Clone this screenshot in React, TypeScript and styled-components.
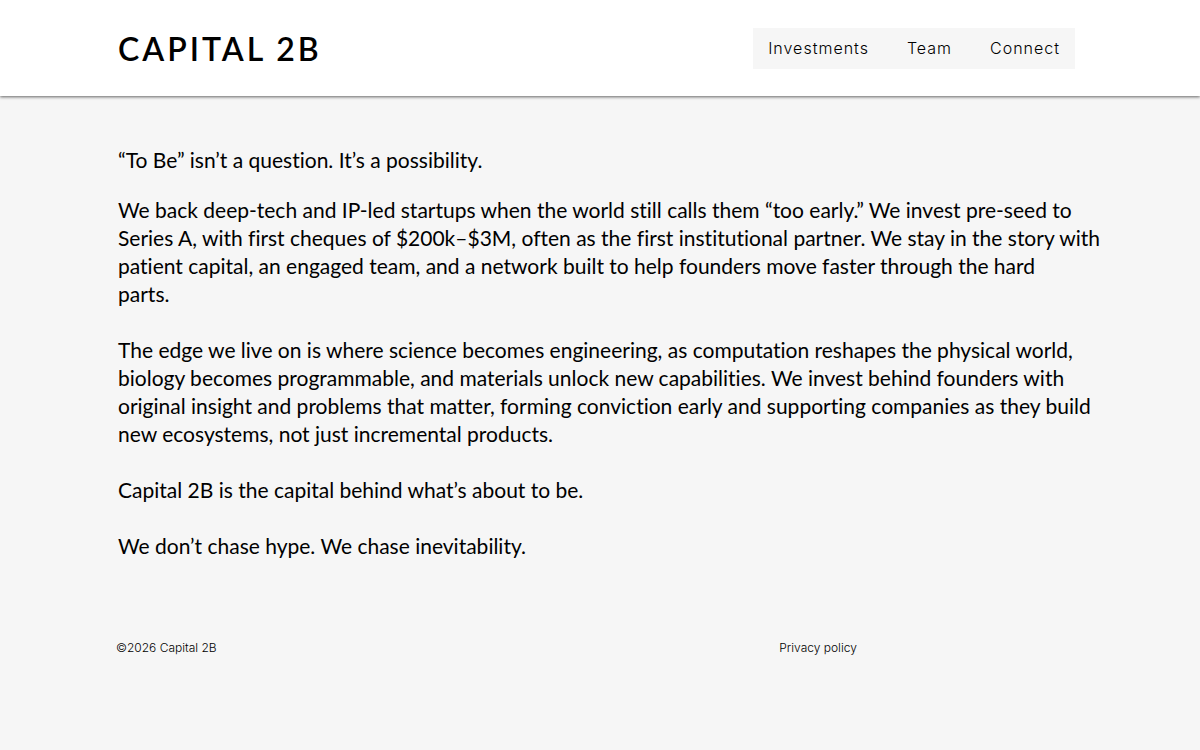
import React from 'react';
import styled, { createGlobalStyle } from 'styled-components';

const GlobalStyle = createGlobalStyle`
  *, *::before, *::after { box-sizing: border-box; }
  body {
    margin: 0;
    background: #f6f6f6;
    color: #000;
    font-family: Inter, "Liberation Sans", sans-serif;
    font-weight: 300;
  }
`;

const Container = styled.div`
  max-width: 980px;
  margin: 0 auto;
  padding: 0 8px;
`;

const Header = styled.header`
  background: #fff;
  box-shadow: 0 1px 3px rgba(0, 0, 0, 0.6);
`;

const HeaderRow = styled(Container)`
  display: flex;
  flex-wrap: wrap;
  align-items: center;
  justify-content: space-between;
  padding: 28px 15px 27px 8px;
`;

const Logo = styled.a`
  color: #000;
  font-family: Lato, sans-serif;
  font-size: 32px;
  font-weight: 600;
  line-height: 40px;
  letter-spacing: 3px;
  text-decoration: none;
`;

const Nav = styled.nav`
  display: flex;
  gap: 38px;
  padding: 0 15px;
  background: #f6f6f6;
`;

const NavLink = styled.a`
  color: #000;
  font-size: 16px;
  line-height: 41px;
  letter-spacing: 1px;
  text-decoration: none;
`;

const Main = styled(Container)`
  padding: 50px 0 0 8px;
`;

const Paragraph = styled.p`
  margin: 0 0 28px;
  font-family: Lato, sans-serif;
  font-size: 21px;
  font-weight: 400;
  font-variant-ligatures: none;
  line-height: 28px;
`;

const Lead = styled(Paragraph)`
  margin-bottom: 22px;
`;

/* Lines keep their breaks on wide screens and flow freely on narrow ones. */
const Line = styled.span`
  @media (min-width: 1120px) {
    display: block;
    white-space: nowrap;
  }
`;

const Footer = styled(Container)`
  display: grid;
  grid-template-columns: 2fr 1fr;
  padding: 52px 0 40px 6px;
  font-size: 12px;
  line-height: 16px;
`;

const PolicyLink = styled.a`
  padding-left: 14px;
  color: inherit;
  text-decoration: none;
`;

const paragraphs = [
  [
    'We back deep-tech and IP-led startups when the world still calls them “too early.” We invest pre-seed to',
    'Series A, with first cheques of $200k–$3M, often as the first institutional partner. We stay in the story with',
    'patient capital, an engaged team, and a network built to help founders move faster through the hard',
    'parts.',
  ],
  [
    'The edge we live on is where science becomes engineering, as computation reshapes the physical world,',
    'biology becomes programmable, and materials unlock new capabilities. We invest behind founders with',
    'original insight and problems that matter, forming conviction early and supporting companies as they build',
    'new ecosystems, not just incremental products.',
  ],
  ['Capital 2B is the capital behind what’s about to be.'],
  ['We don’t chase hype. We chase inevitability.'],
];

export default function App() {
  return (
    <>
      <GlobalStyle />
      <Header>
        <HeaderRow>
          <Logo href="#home">CAPITAL 2B</Logo>
          <Nav aria-label="Main">
            <NavLink href="#investments">Investments</NavLink>
            <NavLink href="#team">Team</NavLink>
            <NavLink href="#connect">Connect</NavLink>
          </Nav>
        </HeaderRow>
      </Header>
      <Main as="main">
        <Lead>“To Be” isn’t a question. It’s a possibility.</Lead>
        {paragraphs.map((lines) => (
          <Paragraph key={lines[0]}>
            {lines.map((line) => (
              <Line key={line}>{line} </Line>
            ))}
          </Paragraph>
        ))}
      </Main>
      <Footer as="footer">
        <span>©2026 Capital 2B</span>
        <PolicyLink href="#privacy">Privacy policy</PolicyLink>
      </Footer>
    </>
  );
}
